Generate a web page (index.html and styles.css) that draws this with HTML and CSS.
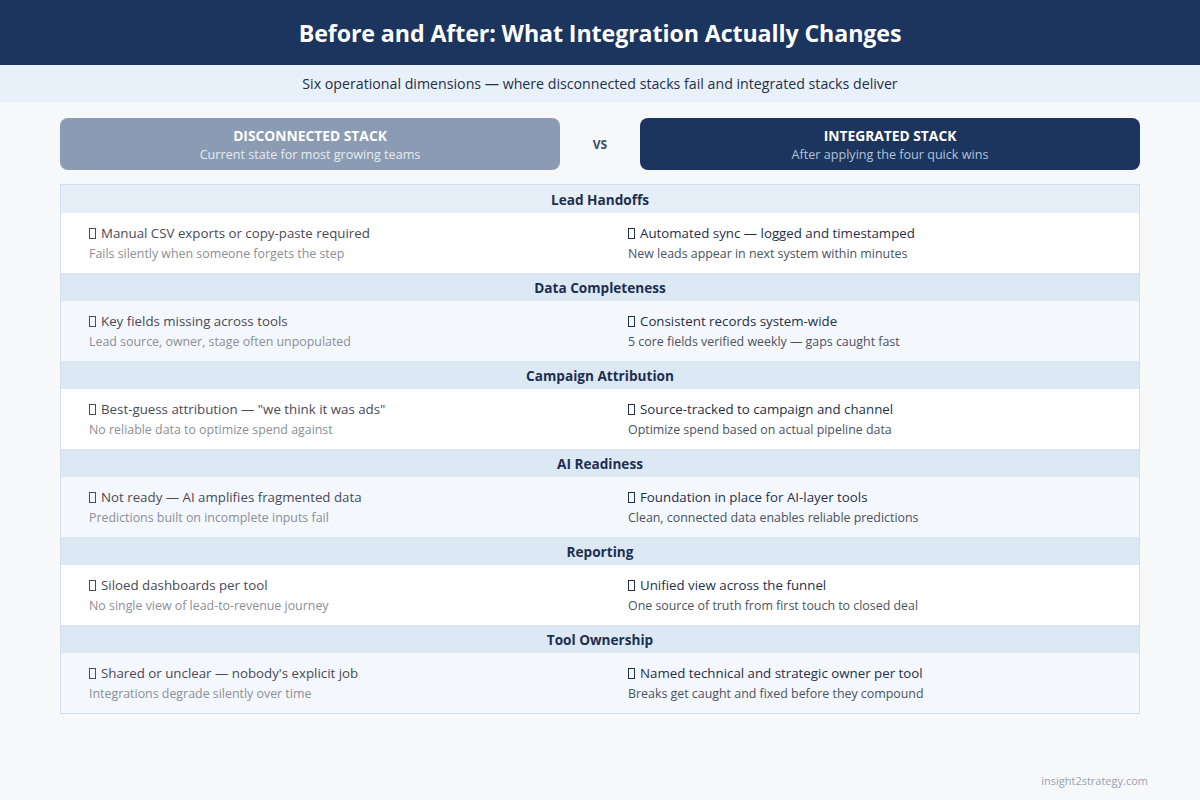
FILE: index.html
```html
<!DOCTYPE html>
<html lang="en">
<head>
<meta charset="utf-8">
<title>Before and After</title>
<link rel="stylesheet" href="styles.css">
</head>
<body>
<header class="top">
  <h1 class="title">Before and After: What Integration Actually Changes</h1>
</header>
<div class="subband">Six operational dimensions — where disconnected stacks fail and integrated stacks deliver</div>
<main class="wrap">
  <div class="heads">
    <div class="head head-before">
      <div class="head-title">DISCONNECTED STACK</div>
      <div class="head-sub">Current state for most growing teams</div>
    </div>
    <div class="vs">VS</div>
    <div class="head head-after">
      <div class="head-title">INTEGRATED STACK</div>
      <div class="head-sub">After applying the four quick wins</div>
    </div>
  </div>
  <div class="table">
    <div class="sec sec-first">Lead Handoffs</div>
    <div class="row">
      <div class="cell before"><div class="main"><span class="tofu"></span>Manual CSV exports or copy-paste required</div><div class="sub">Fails silently when someone forgets the step</div></div>
      <div class="cell after"><div class="main"><span class="tofu"></span>Automated sync — logged and timestamped</div><div class="sub">New leads appear in next system within minutes</div></div>
    </div>
    <div class="sec">Data Completeness</div>
    <div class="row alt">
      <div class="cell before"><div class="main"><span class="tofu"></span>Key fields missing across tools</div><div class="sub">Lead source, owner, stage often unpopulated</div></div>
      <div class="cell after"><div class="main"><span class="tofu"></span>Consistent records system-wide</div><div class="sub">5 core fields verified weekly — gaps caught fast</div></div>
    </div>
    <div class="sec">Campaign Attribution</div>
    <div class="row">
      <div class="cell before"><div class="main"><span class="tofu"></span>Best-guess attribution — "we think it was ads"</div><div class="sub">No reliable data to optimize spend against</div></div>
      <div class="cell after"><div class="main"><span class="tofu"></span>Source-tracked to campaign and channel</div><div class="sub">Optimize spend based on actual pipeline data</div></div>
    </div>
    <div class="sec">AI Readiness</div>
    <div class="row alt">
      <div class="cell before"><div class="main"><span class="tofu"></span>Not ready — AI amplifies fragmented data</div><div class="sub">Predictions built on incomplete inputs fail</div></div>
      <div class="cell after"><div class="main"><span class="tofu"></span>Foundation in place for AI-layer tools</div><div class="sub">Clean, connected data enables reliable predictions</div></div>
    </div>
    <div class="sec">Reporting</div>
    <div class="row">
      <div class="cell before"><div class="main"><span class="tofu"></span>Siloed dashboards per tool</div><div class="sub">No single view of lead-to-revenue journey</div></div>
      <div class="cell after"><div class="main"><span class="tofu"></span>Unified view across the funnel</div><div class="sub">One source of truth from first touch to closed deal</div></div>
    </div>
    <div class="sec">Tool Ownership</div>
    <div class="row alt">
      <div class="cell before"><div class="main"><span class="tofu"></span>Shared or unclear — nobody's explicit job</div><div class="sub">Integrations degrade silently over time</div></div>
      <div class="cell after"><div class="main"><span class="tofu"></span>Named technical and strategic owner per tool</div><div class="sub">Breaks get caught and fixed before they compound</div></div>
    </div>
  </div>
</main>
<footer class="foot">insight2strategy.com</footer>
</body>
</html>
```
FILE: styles.css
```css
* { box-sizing: border-box; }
html, body { margin: 0; padding: 0; }
body {
  width: 1200px;
  height: 800px;
  background: #f6f8fa;
  font-family: "Open Sans", "Noto Sans", sans-serif;
  display: flex;
  flex-direction: column;
  overflow: hidden;
}
.top {
  height: 65px;
  background: #1c355e;
  display: flex;
  align-items: center;
  justify-content: center;
}
.title {
  margin: 0;
  color: #ffffff;
  font-size: 23.2px;
  font-weight: 700;
  letter-spacing: -0.1px;
  line-height: 30px;
}
.subband {
  height: 37px;
  background: #e8f0f9;
  color: #1e2f4a;
  font-size: 14.2px;
  display: flex;
  align-items: center;
  justify-content: center;
}
.wrap {
  padding: 16px 60px 0 60px;
}
.heads {
  display: flex;
  align-items: center;
  height: 52px;
}
.head {
  width: 500px;
  height: 52px;
  border-radius: 8px;
  padding-top: 3px;
  display: flex;
  flex-direction: column;
  align-items: center;
  justify-content: center;
}
.head-before { background: #8a9bb3; }
.head-after { background: #1c355e; }
.head-title {
  color: #ffffff;
  font-weight: 700;
  font-size: 13.8px;
  line-height: 19px;
}
.head-before .head-sub { color: #e6ebf2; }
.head-after .head-sub { color: #b4c3d8; }
.head-sub {
  font-size: 12.6px;
  line-height: 20px;
}
.vs {
  flex: 1;
  text-align: center;
  color: #3d4b62;
  font-weight: 700;
  font-size: 12px;
}
.table {
  margin-top: 14px;
  border: 1px solid #d5e0ec;
}
.sec {
  height: 28px;
  background: #dde8f5;
  color: #1c2f50;
  font-size: 13.6px;
  font-weight: 700;
  display: flex;
  align-items: center;
  justify-content: center;
}
.sec-first { background: #e6eef8; }
.row {
  height: 60px;
  display: flex;
  background: #ffffff;
}
.row.alt { background: #f4f7fb; }
.cell {
  width: 50%;
  padding: 10px 28px 0 28px;
}
.main {
  font-size: 13.3px;
  line-height: 20px;
  white-space: nowrap;
}
.sub {
  margin-top: 1px;
  font-size: 12.4px;
  line-height: 20px;
  white-space: nowrap;
}
.before .main { color: #4a4a58; }
.before .sub { color: #8c8e99; }
.after .main { color: #1f2f4c; }
.after .sub { color: #4a5263; }
.tofu {
  display: inline-block;
  width: 7px;
  height: 11px;
  border: 1px solid currentColor;
  margin-right: 5px;
  vertical-align: -1px;
}
.foot {
  margin-top: auto;
  padding: 0 52px 12px 0;
  text-align: right;
  color: #9aa2b0;
  font-size: 11px;
  line-height: 14px;
}
```
